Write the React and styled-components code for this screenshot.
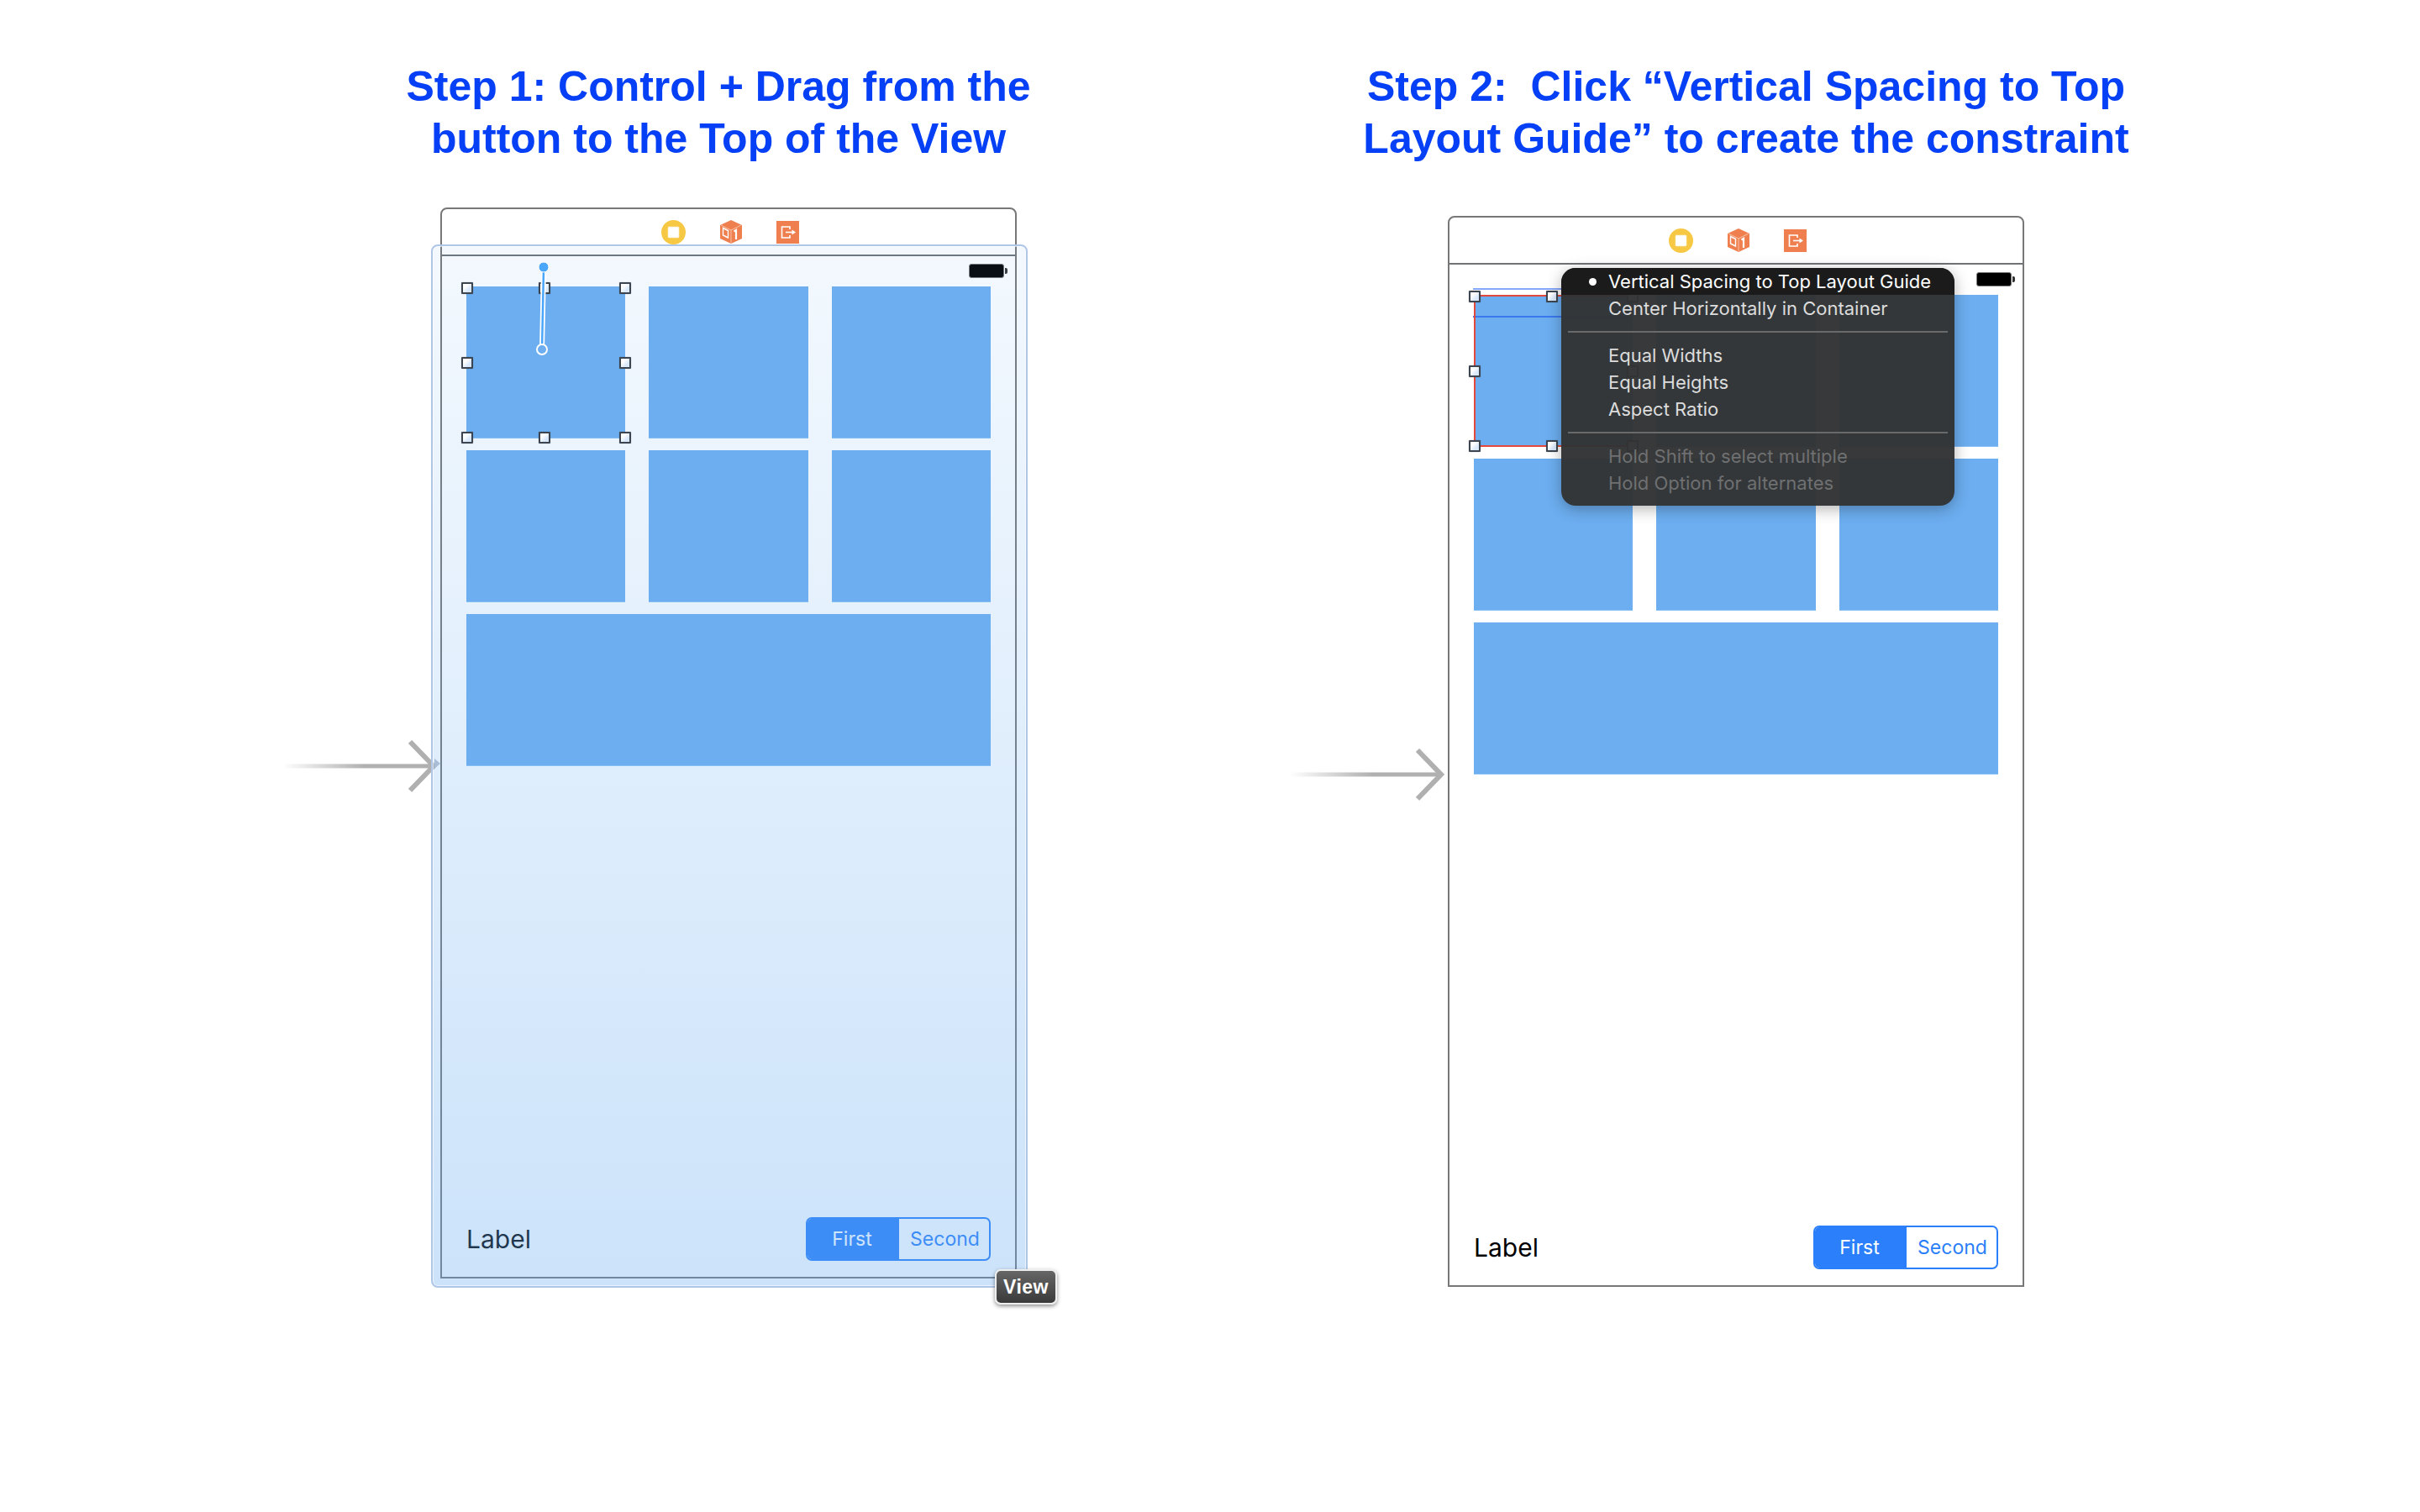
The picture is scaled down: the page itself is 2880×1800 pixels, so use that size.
import React from "react";
import styled, { createGlobalStyle } from "styled-components";

const GlobalStyle = createGlobalStyle`
  html, body {
    margin: 0;
    background: #fff;
  }
  body {
    font-family: "Inter", "Liberation Sans", sans-serif;
  }
`;

const Page = styled.div`
  width: 2880px;
  height: 1800px;
  overflow: hidden;
  padding-top: 72px;
  box-sizing: border-box;
`;

const Titles = styled.div`
  display: flex;
  gap: 323px;
  padding-left: 455px;
`;

const Title = styled.h1`
  margin: 0;
  width: ${(p) => p.$width}px;
  font-family: "Liberation Sans", sans-serif;
  font-size: 50px;
  line-height: 62px;
  font-weight: 700;
  text-align: center;
  color: #0640f6;
  white-space: pre;
`;

const Boards = styled.div`
  display: flex;
  align-items: flex-start;
  gap: 513px;
  padding: 51px 0 0 524px;
`;

const Board = styled.div`
  position: relative;
  flex: none;
  width: 686px;
  height: 1275px;
  margin-top: ${(p) => p.$offset || 0}px;
  box-sizing: border-box;
  border: 2px solid #777;
  border-radius: 8px 8px 0 0;
  display: flex;
  flex-direction: column;
  background: #fff;
`;

const TopBar = styled.div`
  flex: none;
  height: 54px;
  border-bottom: 2px solid #6e7378;
  display: flex;
  align-items: center;
  justify-content: center;
  gap: 41px;
  padding-left: 4px;
`;

const Canvas = styled.div`
  flex: 1;
  position: relative;
  display: flex;
  flex-direction: column;
  padding: 36px 29px 19px;
`;

const Battery = styled.div`
  position: absolute;
  top: 9px;
  right: 13px;
  width: 40px;
  height: 15px;
  background: #000;
  border: 1px solid #777;
  border-radius: 3px;

  &::after {
    content: "";
    position: absolute;
    right: -5px;
    top: 4px;
    width: 3px;
    height: 7px;
    background: #333;
    border-radius: 0 2px 2px 0;
  }
`;

const CellGrid = styled.div`
  display: grid;
  grid-template-columns: 189px 190px 189px;
  grid-auto-rows: 181px;
  justify-content: space-between;
  row-gap: 14px;
`;

const Cell = styled.div`
  position: relative;
  z-index: 2;
  grid-column: ${(p) => (p.$wide ? "1 / -1" : "auto")};
  background: #6caef0;
  box-shadow: inset 0 -1px 0 #85bdf5;
`;

const Handle = styled.span`
  position: absolute;
  left: ${(p) => p.$x}%;
  top: ${(p) => p.$y}%;
  width: 14px;
  height: 14px;
  box-sizing: border-box;
  transform: translate(-50%, -50%);
  background: linear-gradient(135deg, #fff 30%, #d9e8fb 70%);
  border: 2px solid #3d4650;
  border-radius: 1px;
  box-shadow: 0 0 1px rgba(0, 0, 0, 0.5);
  z-index: 3;
`;

const Outline = styled.div`
  position: absolute;
  inset: 0;
  border: 2px solid #e2493c;
  border-right-width: 0;
`;

const GhostGuide = styled.div`
  position: absolute;
  left: -1px;
  right: 0;
  top: -8px;
  height: 35px;
  box-sizing: border-box;
  background: linear-gradient(#fff 8px, transparent 8px);
  border-top: 2px solid #84a6fb;
  border-bottom: 2px solid #3b78ee;
`;

const LinkLine = styled.svg`
  position: absolute;
  left: 83px;
  top: -29px;
  z-index: 4;
  overflow: visible;
`;

const Footer = styled.div`
  margin-top: auto;
  display: flex;
  align-items: center;
  justify-content: space-between;
`;

const Label = styled.span`
  font-size: 30px;
  font-weight: 400;
  color: #000;
`;

const Segmented = styled.div`
  display: flex;
  width: 220px;
  height: 52px;
  box-sizing: border-box;
  border: 2px solid #2b7ffa;
  border-radius: 7px;
  overflow: hidden;
`;

const Segment = styled.div`
  width: ${(p) => (p.$active ? 109 : 107)}px;
  box-sizing: border-box;
  padding: ${(p) => (p.$active ? "0 3px 0 0" : "0 0 0 2px")};
  display: flex;
  align-items: center;
  justify-content: center;
  font-size: 23px;
  color: ${(p) => (p.$active ? "#fff" : "#2b7ffa")};
  background: ${(p) => (p.$active ? "#2b7ffa" : "transparent")};
`;

const DropHighlight = styled.div`
  position: absolute;
  left: -13px;
  top: 42px;
  width: 710px;
  height: 1242px;
  box-sizing: border-box;
  border: 2px solid #afc6e6;
  border-radius: 8px;
  box-shadow: inset 0 0 0 1px rgba(255, 255, 255, 0.6);
  background: linear-gradient(rgba(100, 170, 240, 0.08), rgba(100, 170, 240, 0.335));
  pointer-events: none;
  z-index: 1;

  &::before {
    content: "";
    position: absolute;
    left: 2px;
    top: 610px;
    border-left: 7px solid #a9bdd6;
    border-top: 6px solid transparent;
    border-bottom: 6px solid transparent;
  }
`;

const ViewBadge = styled.div`
  position: absolute;
  right: -50px;
  bottom: -33px;
  width: 74px;
  height: 42px;
  box-sizing: border-box;
  display: flex;
  align-items: center;
  justify-content: center;
  font-family: "Liberation Sans", sans-serif;
  font-size: 23px;
  font-weight: 700;
  letter-spacing: 0.5px;
  color: #fff;
  background: linear-gradient(#666, #3a3a3a);
  border: 2px solid #eee;
  border-radius: 7px;
  box-shadow: 0 2px 5px rgba(0, 0, 0, 0.45);
  z-index: 5;
`;

const EntryArrow = styled.svg`
  position: absolute;
  left: -190px;
  top: 628px;
`;

const Menu = styled.div`
  position: absolute;
  left: 133px;
  top: 60px;
  width: 468px;
  height: 283px;
  box-sizing: border-box;
  border-radius: 17px;
  overflow: hidden;
  background: rgba(50, 51, 52, 0.97);
  box-shadow: 0 4px 18px rgba(0, 0, 0, 0.3);
  z-index: 6;
`;

const MenuRow = styled.div`
  position: relative;
  height: 32px;
  padding-left: 56px;
  display: flex;
  align-items: center;
  font-size: 22px;
  white-space: nowrap;
  color: ${(p) => (p.$muted ? "#6f7071" : p.$selected ? "#fff" : "#dcdcdc")};
  background: ${(p) => (p.$selected ? "#1b1b1c" : "transparent")};

  ${(p) =>
    p.$selected &&
    `&::before {
      content: "";
      position: absolute;
      left: 33px;
      top: 12px;
      width: 9px;
      height: 9px;
      border-radius: 50%;
      background: #fff;
    }`}
`;

const MenuSeparator = styled.div`
  height: 2px;
  margin: 11px 8px;
  background: #6a6a6b;
`;

function CoinIcon() {
  return (
    <svg width="29" height="29" viewBox="0 0 29 29">
      <circle cx="14.5" cy="14.5" r="14.5" fill="#f6c843" />
      <rect x="8" y="8" width="13" height="13" rx="1" fill="#fff" stroke="#fbe9b5" strokeDasharray="2 1" />
    </svg>
  );
}

function CubeIcon() {
  return (
    <svg width="26" height="28" viewBox="0 0 26 28">
      <path d="M13 0 L26 6 V22 L13 28 L0 22 V6 Z" fill="#ef7f4f" />
      <path d="M1 6 L13 12 L25 6 M13 12 V27" fill="none" stroke="#f9c4a8" strokeWidth="1" />
      <path d="M3.5 9.5 L9.5 12.5 V21 L3.5 18 Z" fill="none" stroke="#fff" strokeWidth="1.4" />
      <path d="M16.5 13.5 L19 12 V23" fill="none" stroke="#fff" strokeWidth="2.2" />
    </svg>
  );
}

function ExitIcon() {
  return (
    <svg width="27" height="27" viewBox="0 0 27 27">
      <rect width="27" height="27" fill="#ef7f4f" />
      <path d="M16 10 V7 H6.5 V20 H16 V17" fill="none" stroke="#fff" strokeWidth="1.6" />
      <path d="M11 13.5 H19" stroke="#fff" strokeWidth="1.6" />
      <path d="M18.5 10.5 L23 13.5 L18.5 16.5 Z" fill="#fff" />
    </svg>
  );
}

function Arrow({ id }) {
  return (
    <EntryArrow width="190" height="70" viewBox="0 0 190 70">
      <defs>
        <linearGradient id={id} x1="0" x2="1" y1="0" y2="0">
          <stop offset="0" stopColor="#b0b0b0" stopOpacity="0" />
          <stop offset="0.55" stopColor="#b0b0b0" />
        </linearGradient>
      </defs>
      <rect x="0" y="32.5" width="178" height="5" fill={`url(#${id})`} />
      <path d="M152 6 L180 35 L152 64" fill="none" stroke="#b0b0b0" strokeWidth="6" />
    </EntryArrow>
  );
}

function BoardHead() {
  return (
    <TopBar>
      <CoinIcon />
      <CubeIcon />
      <ExitIcon />
    </TopBar>
  );
}

function Footing() {
  return (
    <Footer>
      <Label>Label</Label>
      <Segmented>
        <Segment $active>First</Segment>
        <Segment>Second</Segment>
      </Segmented>
    </Footer>
  );
}

function Handles() {
  const spots = [
    [0.5, 1], [49, 1], [100, 1],
    [0.5, 50], [100, 50],
    [0.5, 99.5], [49, 99.5], [100, 99.5],
  ];
  return spots.map(([x, y]) => <Handle key={`${x}-${y}`} $x={x} $y={y} />);
}

function Cells({ children }) {
  return (
    <CellGrid>
      <Cell>{children}</Cell>
      {[1, 2, 3, 4, 5].map((n) => (
        <Cell key={n} />
      ))}
      <Cell $wide />
    </CellGrid>
  );
}

const menu = [
  ["Center Horizontally in Container"],
  ["Equal Widths", "Equal Heights", "Aspect Ratio"],
  ["Hold Shift to select multiple", "Hold Option for alternates"],
];

export default function App() {
  return (
    <Page>
      <GlobalStyle />
      <Titles>
        <Title $width={800}>{"Step 1: Control + Drag from the\nbutton to the Top of the View"}</Title>
        <Title $width={1000}>{"Step 2:  Click “Vertical Spacing to Top\nLayout Guide” to create the constraint"}</Title>
      </Titles>
      <Boards>
        <Board>
          <BoardHead />
          <Canvas>
            <Battery />
            <Cells>
              <LinkLine width="16" height="120" viewBox="0 0 16 120">
                <path d="M9 8 L7 104" stroke="#fff" strokeWidth="6" />
                <path d="M9 8 L7 104" stroke="#4aa6fb" strokeWidth="2.5" />
                <circle cx="9" cy="6" r="6" fill="#4aa6fb" stroke="#fff" strokeWidth="1" />
                <circle cx="7" cy="104" r="6" fill="#6caef0" stroke="#fff" strokeWidth="2" />
              </LinkLine>
              <Handles />
            </Cells>
            <Footing />
          </Canvas>
          <DropHighlight />
          <ViewBadge>View</ViewBadge>
          <Arrow id="fadeLeft" />
        </Board>
        <Board $offset={10}>
          <BoardHead />
          <Canvas>
            <Battery />
            <Cells>
              <GhostGuide />
              <Outline />
              <Handles />
            </Cells>
            <Footing />
          </Canvas>
          <Menu>
            <MenuRow $selected>Vertical Spacing to Top Layout Guide</MenuRow>
            {menu.map((group, i) => (
              <React.Fragment key={i}>
                {i > 0 && <MenuSeparator />}
                {group.map((text) => (
                  <MenuRow key={text} $muted={i === 2}>
                    {text}
                  </MenuRow>
                ))}
              </React.Fragment>
            ))}
          </Menu>
          <Arrow id="fadeRight" />
        </Board>
      </Boards>
    </Page>
  );
}
